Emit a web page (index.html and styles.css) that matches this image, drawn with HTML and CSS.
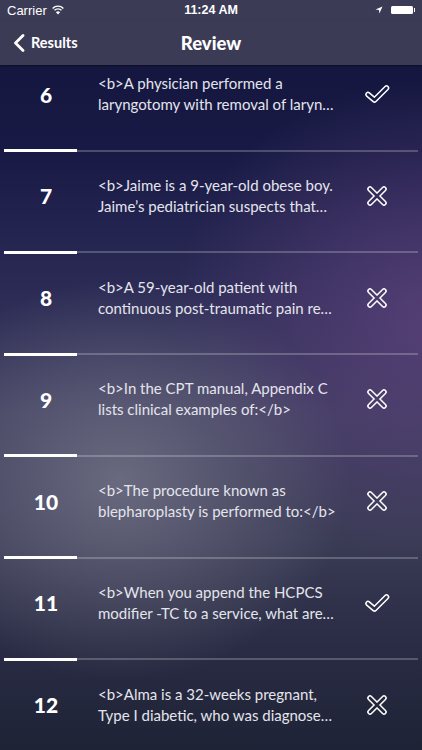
FILE: index.html
```html
<!DOCTYPE html>
<html>
<head>
<meta charset="utf-8">
<link rel="stylesheet" href="styles.css">
</head>
<body>
<div class="screen">
  <div class="statusbar">
    <div class="sb-left">
      <span class="carrier">Carrier</span>
      <svg class="wifi" width="12" height="10" viewBox="0 0 12 10">
        <path d="M0.6 3.4 A7.6 7.6 0 0 1 11.4 3.4" fill="none" stroke="#fff" stroke-width="1.4"/>
        <path d="M2.5 5.3 A4.9 4.9 0 0 1 9.5 5.3" fill="none" stroke="#fff" stroke-width="1.4"/>
        <path d="M6 9.5 L3.9 7.2 A3 3 0 0 1 8.1 7.2 Z" fill="#fff"/>
      </svg>
    </div>
    <div class="time">11:24 AM</div>
    <div class="sb-right">
      <svg class="loc" width="8" height="8" viewBox="0 0 8 8"><path d="M7.5 0.5 L0.5 3.6 L4 4 L4.4 7.5 Z" fill="#fff"/></svg>
      <div class="battery"><div class="batt-body"></div><div class="batt-tip"></div></div>
    </div>
  </div>
  <div class="navbar">
    <div class="back">
      <svg width="12" height="18" viewBox="0 0 12 18"><path d="M10 1.5 L2.5 9 L10 16.5" fill="none" stroke="#fff" stroke-width="2.8" stroke-linecap="round" stroke-linejoin="round"/></svg>
      <span>Results</span>
    </div>
    <div class="title">Review</div>
  </div>
  <div class="list">
    <div class="list-inner">
      <div class="row"><div class="num">6</div><div class="q">&lt;b&gt;A physician performed a<br>laryngotomy with removal of laryn…</div><div class="mark"><svg width="26" height="20" viewBox="0 0 26 20"><defs><mask id="mc6"><rect width="26" height="20" fill="#000"/><path d="M4 10.5 L10.5 16 L22.5 4" fill="none" stroke="#fff" stroke-width="5.6" stroke-linecap="round" stroke-linejoin="round"/><path d="M4 10.5 L10.5 16 L22.5 4" fill="none" stroke="#000" stroke-width="2.6" stroke-linecap="round" stroke-linejoin="round"/></mask></defs><rect width="26" height="20" fill="#fff" mask="url(#mc6)"/></svg></div></div>
      <div class="sep"><div class="sep-hi"></div><div class="sep-lo"></div></div>

      <div class="row"><div class="num">7</div><div class="q">&lt;b&gt;Jaime is a 9-year-old obese boy.<br>Jaime’s pediatrician suspects that…</div><div class="mark"><svg width="22" height="22" viewBox="0 0 22 22"><defs><mask id="mx7"><rect width="22" height="22" fill="#000"/><path d="M4 4 L18 18 M18 4 L4 18" fill="none" stroke="#fff" stroke-width="5.6" stroke-linecap="round"/><path d="M4 4 L18 18 M18 4 L4 18" fill="none" stroke="#000" stroke-width="2.6" stroke-linecap="round"/></mask></defs><rect width="22" height="22" fill="#fff" mask="url(#mx7)"/></svg></div></div>
      <div class="sep"><div class="sep-hi"></div><div class="sep-lo"></div></div>

      <div class="row"><div class="num">8</div><div class="q">&lt;b&gt;A 59-year-old patient with<br>continuous post-traumatic pain re…</div><div class="mark"><svg width="22" height="22" viewBox="0 0 22 22"><defs><mask id="mx8"><rect width="22" height="22" fill="#000"/><path d="M4 4 L18 18 M18 4 L4 18" fill="none" stroke="#fff" stroke-width="5.6" stroke-linecap="round"/><path d="M4 4 L18 18 M18 4 L4 18" fill="none" stroke="#000" stroke-width="2.6" stroke-linecap="round"/></mask></defs><rect width="22" height="22" fill="#fff" mask="url(#mx8)"/></svg></div></div>
      <div class="sep"><div class="sep-hi"></div><div class="sep-lo"></div></div>

      <div class="row"><div class="num">9</div><div class="q">&lt;b&gt;In the CPT manual, Appendix C<br>lists clinical examples of:&lt;/b&gt;</div><div class="mark"><svg width="22" height="22" viewBox="0 0 22 22"><defs><mask id="mx9"><rect width="22" height="22" fill="#000"/><path d="M4 4 L18 18 M18 4 L4 18" fill="none" stroke="#fff" stroke-width="5.6" stroke-linecap="round"/><path d="M4 4 L18 18 M18 4 L4 18" fill="none" stroke="#000" stroke-width="2.6" stroke-linecap="round"/></mask></defs><rect width="22" height="22" fill="#fff" mask="url(#mx9)"/></svg></div></div>
      <div class="sep"><div class="sep-hi"></div><div class="sep-lo"></div></div>

      <div class="row"><div class="num">10</div><div class="q">&lt;b&gt;The procedure known as<br>blepharoplasty is performed to:&lt;/b&gt;</div><div class="mark"><svg width="22" height="22" viewBox="0 0 22 22"><defs><mask id="mx10"><rect width="22" height="22" fill="#000"/><path d="M4 4 L18 18 M18 4 L4 18" fill="none" stroke="#fff" stroke-width="5.6" stroke-linecap="round"/><path d="M4 4 L18 18 M18 4 L4 18" fill="none" stroke="#000" stroke-width="2.6" stroke-linecap="round"/></mask></defs><rect width="22" height="22" fill="#fff" mask="url(#mx10)"/></svg></div></div>
      <div class="sep"><div class="sep-hi"></div><div class="sep-lo"></div></div>

      <div class="row"><div class="num">11</div><div class="q">&lt;b&gt;When you append the HCPCS<br>modifier -TC to a service, what are…</div><div class="mark"><svg width="26" height="20" viewBox="0 0 26 20"><defs><mask id="mc11"><rect width="26" height="20" fill="#000"/><path d="M4 10.5 L10.5 16 L22.5 4" fill="none" stroke="#fff" stroke-width="5.6" stroke-linecap="round" stroke-linejoin="round"/><path d="M4 10.5 L10.5 16 L22.5 4" fill="none" stroke="#000" stroke-width="2.6" stroke-linecap="round" stroke-linejoin="round"/></mask></defs><rect width="26" height="20" fill="#fff" mask="url(#mc11)"/></svg></div></div>
      <div class="sep"><div class="sep-hi"></div><div class="sep-lo"></div></div>

      <div class="row"><div class="num">12</div><div class="q">&lt;b&gt;Alma is a 32-weeks pregnant,<br>Type I diabetic, who was diagnose…</div><div class="mark"><svg width="22" height="22" viewBox="0 0 22 22"><defs><mask id="mx12"><rect width="22" height="22" fill="#000"/><path d="M4 4 L18 18 M18 4 L4 18" fill="none" stroke="#fff" stroke-width="5.6" stroke-linecap="round"/><path d="M4 4 L18 18 M18 4 L4 18" fill="none" stroke="#000" stroke-width="2.6" stroke-linecap="round"/></mask></defs><rect width="22" height="22" fill="#fff" mask="url(#mx12)"/></svg></div></div>
    </div>
  </div>
</div>
</body>
</html>
```

FILE: styles.css
```css
html, body {
  margin: 0;
  padding: 0;
}
body {
  width: 422px;
  height: 750px;
  overflow: hidden;
  font-family: "Lato", "Open Sans", sans-serif;
  color: #fff;
}
.screen {
  width: 422px;
  height: 750px;
  display: flex;
  flex-direction: column;
  background:
    radial-gradient(ellipse 230px 200px at 120px 480px, rgba(120,120,140,0.75), rgba(120,120,140,0) 100%),
    radial-gradient(ellipse 260px 240px at 430px 320px, rgba(88,64,120,0.9), rgba(88,64,120,0) 100%),
    linear-gradient(to bottom, #11143b 0%, #181a45 20%, #2a2a55 38%, #3e3d5e 55%, #3a3b55 72%, #292c44 86%, #1f2336 100%);
}
.statusbar {
  height: 20px;
  background: #3c3b55;
  display: flex;
  align-items: center;
  justify-content: space-between;
  padding: 0 7px;
  font-size: 13px;
  position: relative;
}
.sb-left {
  display: flex;
  align-items: center;
  gap: 5px;
}
.carrier {
  font-family: "Liberation Sans", Arial, sans-serif;
  font-size: 13px;
}
.time {
  position: absolute;
  left: 0;
  right: 0;
  text-align: center;
  font-family: "Liberation Sans", Arial, sans-serif;
  font-weight: 700;
  font-size: 12.5px;
  pointer-events: none;
}
.sb-right {
  display: flex;
  align-items: center;
  gap: 8px;
}
.battery {
  display: flex;
  align-items: center;
}
.batt-body {
  width: 22px;
  height: 8px;
  background: #fff;
  border-radius: 1.5px;
}
.batt-tip {
  width: 1.5px;
  height: 3.5px;
  background: #fff;
  margin-left: 1px;
}
.navbar {
  height: 45px;
  background: #3c3b55;
  position: relative;
  display: flex;
  align-items: center;
  box-shadow: 0 1px 2px rgba(0,0,0,0.4);
  z-index: 2;
}
.back {
  display: flex;
  align-items: center;
  gap: 6px;
  padding-left: 13px;
  font-weight: 700;
  font-size: 14.5px;
}
.title {
  position: absolute;
  left: 0;
  right: 0;
  text-align: center;
  font-weight: 900;
  font-size: 18.5px;
  pointer-events: none;
}
.list {
  flex: 1;
  overflow: hidden;
}
.list-inner {
  margin-top: -14.75px;
}
.row {
  height: 87.75px;
  padding-bottom: 11px;
  display: flex;
  align-items: center;
}
.num {
  width: 92px;
  text-align: center;
  font-weight: 900;
  font-size: 21px;
}
.q {
  flex: 1;
  padding-left: 6px;
  font-size: 15px;
  line-height: 21px;
  color: #e4e4ec;
  white-space: nowrap;
}
.mark {
  width: 70px;
  display: flex;
  justify-content: center;
  align-items: center;
  padding-right: 10px;
}
.mark svg {
  display: block;
}
.sep {
  height: 3px;
  margin: 0 4px;
  display: flex;
  align-items: center;
}
.sep-hi {
  width: 73px;
  height: 3px;
  background: #fff;
}
.sep-lo {
  flex: 1;
  height: 2px;
  background: rgba(255,255,255,0.22);
}
```
